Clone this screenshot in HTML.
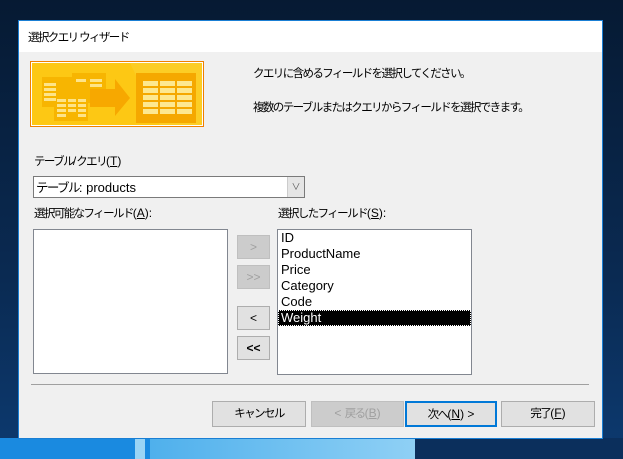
<!DOCTYPE html>
<html><head><meta charset="utf-8"><style>
*{margin:0;padding:0;box-sizing:border-box}
body{width:623px;height:459px;overflow:hidden;position:relative;background:linear-gradient(180deg,#061a33 0%,#0a2a52 60%,#0d3a70 100%);font-family:"Liberation Sans","Noto Sans CJK JP",sans-serif;font-size:12px;color:#000}
.a{position:absolute}
.j{letter-spacing:-1.6px;font-size:11.5px}
.l{letter-spacing:0;font-size:12px}
.dlg{left:18px;top:20px;width:585px;height:419px;background:#f0f0f0;border:1px solid #1a7fd4}
.title{left:0;top:0;width:583px;height:31px;background:#fff}
.btn{position:absolute;background:#e1e1e1;border:1px solid #adadad;text-align:center;line-height:23px}
.dis{color:#a0a0a0;background:#cccccc;border-color:#bfbfbf}
.list{position:absolute;background:#fff;border:1px solid #828790}
u{text-decoration:underline}
</style></head><body>
<div class="a" style="left:0;top:438px;width:160px;height:21px;background:#1a8ae0"></div>
<div class="a" style="left:135px;top:438px;width:10px;height:21px;background:#9ad4f5"></div>
<div class="a" style="left:150px;top:438px;width:265px;height:21px;background:linear-gradient(90deg,#4fb0ec,#8fd0f5)"></div>
<div class="a" style="left:415px;top:438px;width:208px;height:21px;background:#0b2f5c"></div>
<div class="a dlg">
<div class="a title"><span class="a j" style="left:9px;top:8px">選択クエリ ウィザード</span></div>
<svg class="a" style="left:11px;top:40px" width="175" height="67" viewBox="0 0 175 67">
<rect x="0.5" y="0.5" width="173" height="65" fill="#fff" stroke="#f08000"/>
<rect x="2" y="2" width="170" height="62" fill="#fdc814"/>
<polygon points="100,2 172,2 172,64 130,64" fill="#fcd030" opacity=".6"/>
<g fill="#f7b400" opacity=".9"><rect x="12" y="16" width="46" height="30"/><rect x="42" y="12" width="34" height="30"/><rect x="24" y="32" width="34" height="28"/></g>
<g fill="#fde48a"><rect x="14" y="22" width="12" height="3"/><rect x="14" y="27" width="12" height="3"/><rect x="14" y="32" width="12" height="3"/><rect x="14" y="37" width="12" height="3"/><rect x="46" y="18" width="10" height="3"/><rect x="60" y="18" width="12" height="3"/><rect x="60" y="23" width="12" height="3"/><rect x="60" y="28" width="12" height="3"/><rect x="60" y="33" width="12" height="3"/><rect x="27" y="38" width="9" height="3"/><rect x="38" y="38" width="8" height="3"/><rect x="48" y="38" width="8" height="3"/><rect x="27" y="43" width="9" height="3"/><rect x="38" y="43" width="8" height="3"/><rect x="48" y="43" width="8" height="3"/><rect x="27" y="48" width="9" height="3"/><rect x="38" y="48" width="8" height="3"/><rect x="48" y="48" width="8" height="3"/><rect x="27" y="53" width="9" height="3"/><rect x="48" y="53" width="8" height="3"/></g>
<polygon points="60,28 85,28 85,18 100,37 85,55 85,46 60,46" fill="#f7a800"/>
<rect x="106" y="12" width="60" height="50" fill="#f5a800"/>
<g fill="#fde890"><rect x="113" y="20" width="15" height="5"/><rect x="130" y="20" width="15" height="5"/><rect x="147" y="20" width="15" height="5"/><rect x="113" y="27" width="15" height="5"/><rect x="130" y="27" width="15" height="5"/><rect x="147" y="27" width="15" height="5"/><rect x="113" y="34" width="15" height="5"/><rect x="130" y="34" width="15" height="5"/><rect x="147" y="34" width="15" height="5"/><rect x="113" y="41" width="15" height="5"/><rect x="130" y="41" width="15" height="5"/><rect x="147" y="41" width="15" height="5"/><rect x="113" y="48" width="15" height="5"/><rect x="130" y="48" width="15" height="5"/><rect x="147" y="48" width="15" height="5"/></g>
</svg>
<span class="a j" style="left:234px;top:44px">クエリに含めるフィールドを選択してください。</span>
<span class="a j" style="left:234px;top:78px">複数のテーブルまたはクエリからフィールドを選択できます。</span>
<span class="a j" style="left:15px;top:132px">テーブル<span class="l">/</span>クエリ<span class="l">(<u>T</u>)</span></span>
<div class="a" style="left:14px;top:155px;width:272px;height:22px;background:#fff;border:1px solid #7a7a7a"><span class="a" style="left:2px;top:0px;font-size:13px"><span class="j" style="font-size:12.5px">テーブル</span>: products</span><div class="a" style="right:0;top:0;width:17px;height:20px;background:#e5e5e5;border-left:1px solid #ccc;text-align:center;font-size:9px;line-height:20px;color:#555">∨</div></div>
<span class="a j" style="left:15px;top:184px">選択可能なフィールド<span class="l">(<u>A</u>):</span></span>
<span class="a j" style="left:259px;top:184px">選択したフィールド<span class="l">(<u>S</u>):</span></span>
<div class="list" style="left:14px;top:208px;width:195px;height:145px"></div>
<div class="btn dis" style="left:218px;top:214px;width:33px;height:24px;line-height:22px">&gt;</div>
<div class="btn dis" style="left:218px;top:244px;width:33px;height:24px;line-height:22px">&gt;&gt;</div>
<div class="btn" style="left:218px;top:285px;width:33px;height:24px;line-height:22px">&lt;</div>
<div class="btn" style="left:218px;top:315px;width:33px;height:24px;line-height:22px;font-weight:bold">&lt;&lt;</div>
<div class="list" style="left:258px;top:208px;width:195px;height:146px;font-size:13px;line-height:16px">
<div style="padding-left:3px">ID</div><div style="padding-left:3px">ProductName</div><div style="padding-left:3px">Price</div><div style="padding-left:3px">Category</div><div style="padding-left:3px">Code</div>
<div style="padding-left:3px;background:#000;color:#fff;outline:1px dotted #fff;outline-offset:-1px">Weight</div></div>
<div class="a" style="left:12px;top:363px;width:558px;height:1px;background:#a0a0a0"></div>
<div class="btn" style="left:193px;top:380px;width:94px;height:26px"><span class="j">キャンセル</span></div>
<div class="btn dis" style="left:292px;top:380px;width:93px;height:26px">&lt; <span class="j">戻る</span>(<u>B</u>)</div>
<div class="btn" style="left:386px;top:380px;width:92px;height:26px;border:2px solid #0078d7;line-height:22px"><span class="j">次へ</span>(<u>N</u>) &gt;</div>
<div class="btn" style="left:482px;top:380px;width:94px;height:26px"><span class="j">完了</span>(<u>F</u>)</div>
</div>
</body></html>
